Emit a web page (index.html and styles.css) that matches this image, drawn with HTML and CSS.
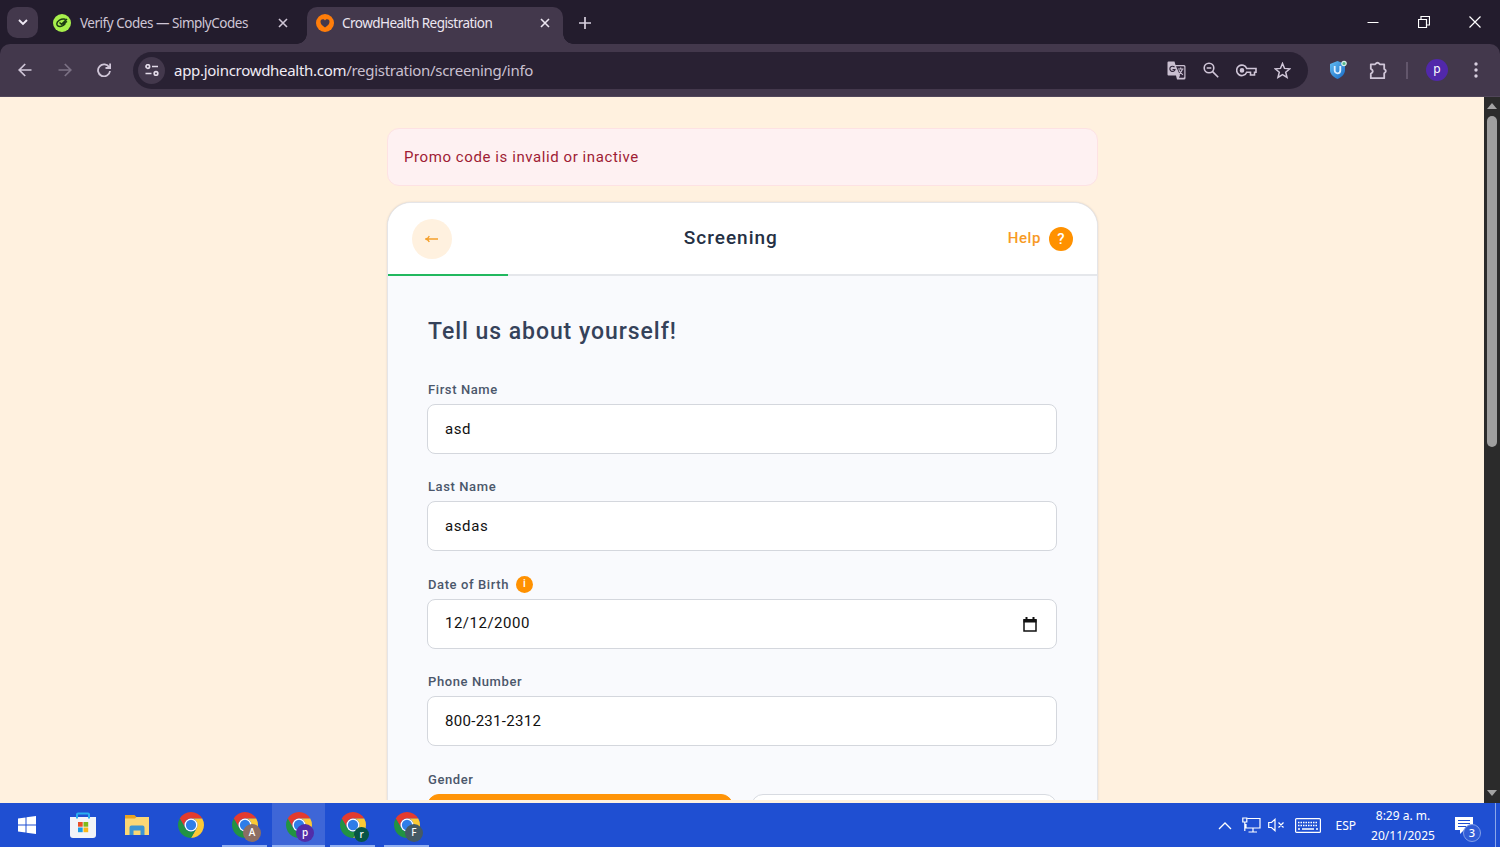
FILE: index.html
```html
<!DOCTYPE html>
<html lang="en">
<head>
<meta charset="utf-8">
<title>CrowdHealth Registration</title>
<link rel="stylesheet" href="styles.css">
</head>
<body>
<svg class="defs" width="0" height="0">
  <symbol id="chrome" viewBox="0 0 48 48">
    <path fill="#e33b2e" d="M24 12H44.78A24 24 0 0 0 3.22 12L13.61 30A12 12 0 0 1 24 12z"/>
    <path fill="#fcc934" d="M24 12H44.78A24 24 0 0 1 24 48L34.39 30A12 12 0 0 0 24 12z"/>
    <path fill="#229342" d="M3.22 12A24 24 0 0 0 24 48L34.39 30A12 12 0 0 1 13.61 30z"/>
    <circle cx="24" cy="24" r="12" fill="#fff"/><circle cx="24" cy="24" r="9.5" fill="#2f7de9"/>
  </symbol>
  <symbol id="close" viewBox="0 0 10 10"><path d="M1 1l8 8M9 1L1 9" fill="none" stroke="currentColor" stroke-width="1.6"/></symbol>
</svg>

<header class="tabs">
  <div class="tab-search"><svg width="10" height="7" viewBox="0 0 10 7"><path d="M1 1l4 4 4-4" fill="none" stroke="#f0eaf5" stroke-width="1.9"/></svg></div>
  <div class="tab">
    <svg class="favicon" width="18" height="18" viewBox="0 0 18 18"><circle cx="9" cy="9" r="9" fill="#a8f04c"/><path d="M12.500 5.300C8 4.300 3.800 6.800 3.800 9.800c0 4 6.200 3.400 8.700-.6M6.500 8.500l2 1.800L14 5M9.500 10.500l4.500-3.200" fill="none" stroke="#1d3c12" stroke-width="1.500"/></svg>
    <span class="tab-title t-codes">Verify Codes — SimplyCodes</span>
    <svg class="tab-x" width="10" height="10"><use href="#close"/></svg>
  </div>
  <div class="tab active">
    <svg class="favicon" width="18" height="18" viewBox="0 0 18 18"><circle cx="9" cy="9" r="9" fill="#ff7d0a"/><path d="M9 13.500C6 11.500 4.500 9.800 4.500 7.700c0-2.700 3.300-3.200 4.500-1.200 1.200-2 4.500-1.500 4.500 1.200 0 2.100-1.500 3.800-4.500 5.800z" fill="#43384c"/></svg>
    <span class="tab-title t-crowd">CrowdHealth Registration</span>
    <svg class="tab-x" width="10" height="10"><use href="#close"/></svg>
  </div>
  <svg class="plus" width="12" height="12" viewBox="0 0 12 12"><path d="M6 0v12M0 6h12" stroke="#d8cfdf" stroke-width="1.700"/></svg>
  <div class="win">
    <svg width="12" height="12" viewBox="0 0 12 12"><path d="M0.500 6.500h11" stroke="#fff"/></svg>
    <svg width="12" height="12" viewBox="0 0 12 12"><path d="M.5 3.500h8v8h-8zM3 3V.5h8.500V9H9" fill="none" stroke="#fff" stroke-width="1.200"/></svg>
    <svg width="12" height="12" viewBox="0 0 12 12"><path d="M.5.5l11 11M11.500.5l-11 11" stroke="#fff" stroke-width="1.200"/></svg>
  </div>
</header>

<nav class="toolbar">
  <svg class="nav-i" width="14" height="14" viewBox="0 0 14 14"><path d="M13.500 7H1.500M7.200 1L1.200 7l6 6" fill="none" stroke="#d0c6d8" stroke-width="1.700"/></svg>
  <svg class="nav-i dim" width="14" height="14" viewBox="0 0 14 14"><path d="M.5 7h12M6.800 1l6 6-6 6" fill="none" stroke="#d0c6d8" stroke-width="1.700"/></svg>
  <svg class="nav-i" width="14" height="14" viewBox="0 0 14 14"><path d="M12.300 4.500A6 6 0 1 0 13 8M13.100.5V5H8.500" fill="none" stroke="#d0c6d8" stroke-width="1.800"/></svg>
  <div class="omnibox">
    <span class="site"><svg width="14" height="12" viewBox="0 0 14 12" fill="none" stroke="#e4dce9" stroke-width="1.700"><circle cx="2.800" cy="2.500" r="1.800"/><path d="M7 2.500h6M.5 9.500h6"/><circle cx="11" cy="9.500" r="1.800"/></svg></span>
    <span class="url"><b>app.joincrowdhealth.com</b>/registration/screening/info</span>
    <svg class="omni-i" width="19" height="19" viewBox="0 0 19 19"><path d="M1.500.5h6l1 3.500h8.500q1.500 0 1.500 1.500v11.500q0 1.500-1.500 1.500H10l-1-4H1.500Q.5 14.500.5 13.500v-12q0-1 1-1z" fill="#c9bfd0"/><path d="M9 5.200h7.300q1 0 1 1v9.600q0 1-1 1H12l1-2.500z" fill="#30263a"/><path d="M7.500 6.200A2.600 2.600 0 1 0 8 8.500H5.500" fill="none" stroke="#30263a" stroke-width="1.200"/><path d="M11 8h5.500M13.700 6.500V8M15.500 8c-.6 2-1.800 4-3.800 5.500M12 9.300c1 2.200 2.200 3.300 3.900 4.600" stroke="#c9bfd0" fill="none" stroke-width="1.100"/></svg>
    <svg class="omni-i" width="16" height="16" viewBox="0 0 16 16" fill="none" stroke="#d0c6d8" stroke-width="1.600"><circle cx="6" cy="6" r="4.800"/><path d="M9.600 9.600l5.600 5.600M3.700 6h4.600"/></svg>
    <svg class="omni-i" width="21" height="13" viewBox="0 0 21 13" fill="none" stroke="#d0c6d8" stroke-width="1.600"><path d="M10.700 4.500H20V8.200H18.500V11H14.500V8.200H10.700A5.200 5.200 0 1 1 10.700 4.500z"/><circle cx="6" cy="6.400" r="1.500" fill="#d0c6d8"/></svg>
    <svg class="omni-i" width="17" height="17" viewBox="0 0 17 17"><path d="M8.500 1.500l2 4.900 5.300.4-4.100 3.400 1.300 5.200-4.500-2.800L4 15.400l1.300-5.200L1.200 6.800l5.300-.4z" fill="none" stroke="#d0c6d8" stroke-width="1.500"/></svg>
  </div>
  <svg class="shield" width="19" height="20" viewBox="0 0 19 20"><defs><linearGradient id="sg" x2="1" y2="1"><stop stop-color="#64bdf2"/><stop offset="1" stop-color="#1769c5"/></linearGradient></defs><path d="M1 4l7.500-3L16 4v6c0 4-3 7-7.500 9C4 17 1 14 1 10z" fill="url(#sg)"/><path d="M5.700 6v4.500a2.800 2.800 0 0 0 5.600 0V6" fill="none" stroke="#dceeff" stroke-width="1.800"/><circle cx="15" cy="3.500" r="2.200" fill="#55b88a" stroke="#d7efe9" stroke-width="1.200"/></svg>
  <svg class="puzzle" width="19" height="19" viewBox="0 0 19 19"><path d="M1.800 3.300H6.200Q8.500 .2 10.800 3.300H15.200V8Q18.500 10 15.200 12.200V17.200H1.800V12.700Q5.800 10.200 1.800 7.700z" fill="none" stroke="#d0c6d8" stroke-width="1.800" stroke-linejoin="round"/></svg>
  <i class="split"></i>
  <span class="profile">p</span>
  <svg class="dots" width="4" height="16" viewBox="0 0 4 16" fill="#d8cfdf"><circle cx="2" cy="2" r="1.700"/><circle cx="2" cy="8" r="1.700"/><circle cx="2" cy="14" r="1.700"/></svg>
</nav>

<div class="viewport">
  <main class="page">
    <div class="alert"><span>Promo code is invalid or inactive</span></div>
    <section class="card">
      <div class="card-head">
        <span class="back"><svg width="13" height="8" viewBox="0 0 13 8"><path d="M13 4H1M4.300 1Q3.500 3.300.8 4q2.700.7 3.500 3" fill="none" stroke="#f5a02c" stroke-width="1.300"/></svg></span>
        <h1>Screening</h1>
        <span class="help"><span class="help-t">Help</span><span class="q">?</span></span>
      </div>
      <div class="progress"><div class="done"></div></div>
      <form class="form">
        <h2>Tell us about yourself!</h2>
        <div class="field"><label>First Name</label><div class="input"><span>asd</span></div></div>
        <div class="field"><label>Last Name</label><div class="input"><span>asdas</span></div></div>
        <div class="field"><label>Date of Birth <span class="info">i</span></label><div class="input"><span class="date">12/12/2000</span><svg width="14" height="15" viewBox="0 0 14 15"><path d="M1 3v11h12V3z" fill="none" stroke="#111" stroke-width="1.500"/><path d="M.5 2h13v3.500H.5zM2.500 0h2v2h-2zM9.500 0h2v2h-2z" fill="#111"/></svg></div></div>
        <div class="field"><label>Phone Number</label><div class="input"><span class="phone">800-231-2312</span></div></div>
        <div class="field"><label>Gender</label><div class="choices"><div class="choice on"></div><div class="choice"></div></div></div>
      </form>
    </section>
  </main>
  <div class="scroll">
    <svg width="10" height="6" viewBox="0 0 10 6"><path d="M5 0l5 6H0z" fill="#a3a3a3"/></svg>
    <div class="thumb"></div>
    <svg class="down" width="10" height="6" viewBox="0 0 10 6"><path d="M0 0h10L5 6z" fill="#a3a3a3"/></svg>
  </div>
</div>

<footer class="taskbar">
  <div class="apps">
    <div class="app start"><svg width="18" height="18" viewBox="0 0 18 18" fill="#fff"><path d="M0 2.600L7.500 1.500V8.500H0zM8.500 1.300L18 0v8.500H8.500zM0 9.500h7.500v7L0 15.400zM8.500 9.500H18V18l-9.500-1.300z"/></svg></div>
    <div class="app"><svg width="26" height="27" viewBox="0 0 26 27"><path d="M7 7V2.500q0-1 1-1h10q1 0 1 1V7" fill="none" stroke="#29aef0" stroke-width="2"/><path d="M0 5h26v18q0 3-3 3H3q-3 0-3-3z" fill="#f1f3f8"/><path d="M7 6.500V2.500M19 6.500V2.500" stroke="#29aef0" stroke-width="2"/><path fill="#e94f28" d="M8 10h4.700v4.700H8z"/><path fill="#7fba1b" d="M13.500 10h4.700v4.700h-4.700z"/><path fill="#1c9be6" d="M8 15.500h4.700v4.700H8z"/><path fill="#f8b817" d="M13.500 15.500h4.700v4.700h-4.700z"/></svg></div>
    <div class="app"><svg width="24" height="21" viewBox="0 0 24 21"><path d="M0 0h9.500l2 2H24v6H0z" fill="#eaa321"/><path d="M0 3.500h10l1.500-1.500H24v18H0z" fill="#fbd775"/><path d="M4.500 20v-7.500q0-2 2-2h11q2 0 2 2V20h-4v-4.500h-7V20z" fill="#3c94d3"/></svg></div>
    <div class="app"><svg width="26" height="26"><use href="#chrome"/></svg></div>
    <div class="app run"><svg width="26" height="26"><use href="#chrome"/></svg><b class="badge a">A</b></div>
    <div class="app run cur"><svg width="26" height="26"><use href="#chrome"/></svg><b class="badge p">p</b></div>
    <div class="app run"><svg width="26" height="26"><use href="#chrome"/></svg><b class="badge r">r</b></div>
    <div class="app run"><svg width="26" height="26"><use href="#chrome"/></svg><b class="badge f">F</b></div>
  </div>
  <div class="tray">
    <svg width="14" height="9" viewBox="0 0 14 9"><path d="M1 8l6-6 6 6" fill="none" stroke="#fff" stroke-width="1.300"/></svg>
    <svg class="net" width="19" height="16" viewBox="0 0 19 16" fill="none" stroke="#fff" stroke-width="1.200"><path d="M5.500 1.500H18V11H4V7M11 11v4M6.500 15h8.500M.8 1h4v4h-4zM2.800 5v9"/></svg>
    <svg class="vol" width="17" height="14" viewBox="0 0 17 14" fill="none" stroke="#fff" stroke-width="1.200"><path d="M.7 4.500h2.800L7 1.300v11.400L3.500 9.500H.7zM10.500 4.500l5 5M15.500 4.500l-5 5"/></svg>
    <svg class="kbd" width="26" height="15" viewBox="0 0 26 15" fill="none" stroke="#fff"><rect x=".6" y=".6" width="24.800" height="13.800" rx="1" stroke-width="1.200"/><path d="M3 4.500h20M3 7.500h20" stroke-width="1.300" stroke-dasharray="1.500 1"/><path d="M3 11h2M7 11h12M21 11h2" stroke-width="1.300"/></svg>
    <span class="lang">ESP</span>
    <div class="clock"><span class="time">8:29 a. m.</span><span class="day">20/11/2025</span></div>
    <div class="notif"><svg width="18" height="17" viewBox="0 0 18 17"><path d="M0 0h18v13H9l-4 4v-4H0z" fill="#fff"/><path d="M3 3.500h12M3 6.500h12M3 9.500h8" stroke="#1f4fd2" stroke-width="1.200"/></svg><b>3</b></div>
    <i class="peek"></i>
  </div>
</footer>
</body>
</html>
```

FILE: styles.css
```css
* { box-sizing: border-box; }
body { margin: 0; width: 1500px; height: 847px; overflow: hidden; display: flex; flex-direction: column; font-family: "Noto Sans", sans-serif; background: #231c2d; }
svg { display: block; flex: none; }
.defs { position: absolute; }

.tabs { height: 44px; flex: none; display: flex; align-items: flex-start; padding-left: 7px; background: #231c2d; }
.tab-search { width: 31px; height: 31px; margin-top: 7px; border-radius: 10px; background: #43384c; display: grid; place-items: center; }
.tab { height: 37px; margin-top: 7px; display: flex; align-items: center; padding: 0 13px 6px 15px; width: 269px; color: #cfc6d6; }
.tab.active { position: relative; width: 256px; height: 37px; padding-left: 9px; background: #43384c; border-radius: 10px 10px 0 0; color: #ece6f1; }
.tab.active::before, .tab.active::after { content: ""; position: absolute; bottom: 0; width: 10px; height: 10px; }
.tab.active::before { left: -10px; background: radial-gradient(circle at 0 0, transparent 9.5px, #43384c 10px); }
.tab.active::after { right: -10px; background: radial-gradient(circle at 100% 0, transparent 9.5px, #43384c 10px); }
.tab-title { flex: 1; margin-left: 9px; padding-top: 1px; font-size: 13.500px; white-space: nowrap; }
.tab.active .tab-title { margin-left: 8px; }
.t-codes { letter-spacing: -0.48px; }
.t-crowd { letter-spacing: -0.53px; }
.tab:not(.active) .tab-x { margin-right: 6px; }
.plus { margin: 17px 0 0 16px; }
.win { margin: 16px 19px 0 auto; display: flex; gap: 39px; }

.toolbar { height: 53px; flex: none; display: flex; align-items: center; padding: 0 22px 0 18px; background: #43384c; border-radius: 10px 10px 0 0; border-bottom: 1px solid #51465a; }
.nav-i { margin-right: 25.500px; }
.nav-i.dim { opacity: .4; }
.nav-i:nth-child(3) { margin-right: 22px; }
.omnibox { width: 1175px; height: 37px; border-radius: 19px; background: #292133; display: flex; align-items: center; padding: 0 17px 0 5px; }
.site { width: 27px; height: 27px; border-radius: 50%; background: #43384c; display: grid; place-items: center; }
.url { flex: 1; margin-left: 9px; font-size: 15px; letter-spacing: -0.29px; color: #c9c0d0; white-space: nowrap; }
.url b { font-weight: 400; color: #f0ebf4; }
.omni-i { margin-left: 17px; }
.shield { margin-left: 21px; }
.puzzle { margin-left: 21px; }
.split { width: 2px; height: 17px; margin-left: 18px; background: #62566b; }
.profile { width: 22px; height: 22px; margin-left: 18px; border-radius: 50%; background: #5128aa; color: #fff; font-size: 12px; line-height: 20px; text-align: center; }
.dots { margin-left: auto; }

.viewport { height: 706px; flex: none; display: flex; overflow: hidden; background: #fff1df; }
.page { width: 1484px; height: 703px; overflow: hidden; display: flex; flex-direction: column; align-items: center; padding-top: 31px; font-family: Roboto, sans-serif; }
.alert { width: 711px; height: 58px; flex: none; margin-left: 1px; border: 1px solid #fde2e3; border-radius: 12px; background: #fef1f2; color: #9f1d35; font-size: 15px; line-height: 56px; padding-left: 16px; letter-spacing: .58px; }
.card { width: 711px; height: 900px; flex: none; margin: 16px 0 0 1px; border: 1px solid #e5e5e8; border-radius: 24px; overflow: hidden; background: #f9fafd; box-shadow: 0 0 2px rgba(80, 80, 100, .2); }
.card-head { height: 71px; display: flex; align-items: center; justify-content: space-between; padding: 0 24px; background: #fff; }
.back { width: 40px; height: 40px; border-radius: 50%; background: #fff1df; display: grid; place-items: center; padding-right: 2px; }
h1 { margin: 0 0 2px 2px; font-size: 19px; font-weight: 500; letter-spacing: 1px; color: #253044; }
.help { display: flex; align-items: center; gap: 8px; color: #f79a25; font-size: 15px; font-weight: 500; letter-spacing: .6px; }
.help-t { margin-top: -1px; }
.q { width: 24px; height: 24px; border-radius: 50%; background: #ff9100; color: #fff; line-height: 24px; text-align: center; letter-spacing: 0; }
.progress { height: 2px; background: #e5e7eb; }
.done { width: 120px; height: 2px; background: #22b85f; }
.form { padding: 40px 40px 0; }
h2 { margin: 0 0 48px; height: 16px; line-height: 32px; font-size: 23px; font-weight: 500; letter-spacing: .95px; color: #35425a; white-space: nowrap; }
.field { height: 97.400px; }
.field label { height: 24px; display: flex; line-height: 20px; font-size: 13px; font-weight: 500; letter-spacing: .6px; color: #4b576b; }
.info { width: 17px; height: 17px; margin: 1px 0 0 7px; border-radius: 50%; background: #ff9100; color: #fff; font-size: 11px; line-height: 16px; text-align: center; letter-spacing: 0; }
.input { width: 630px; height: 50px; margin-left: -1px; display: flex; align-items: center; justify-content: space-between; padding: 0 19px 1px 17px; border: 1px solid #d4d7dd; border-radius: 8px; background: #fff; font-size: 15px; letter-spacing: .6px; color: #111; }
.date { letter-spacing: .5px; }
.phone { letter-spacing: .3px; }
.input svg { margin-top: 2px; }
.choices { display: flex; gap: 18px; margin-left: -1px; }
.choice { width: 306px; height: 50px; border: 1px solid #d8dbe1; border-radius: 12px; background: #fff; }
.choice.on { background: #ff9408; border-color: #ff9408; }
.scroll { width: 16px; display: flex; flex-direction: column; align-items: center; padding: 6px 0 7px; background: #2b2b2b; }
.thumb { width: 10px; height: 331px; margin-top: 7px; border-radius: 5px; background: #9f9f9f; }
.down { margin-top: auto; }

.taskbar { height: 44px; flex: none; display: flex; justify-content: space-between; background: #1f4fd2; color: #fff; }
.apps { display: flex; gap: 1px; }
.app { position: relative; width: 53px; height: 44px; display: grid; place-items: center; }
.app.start { width: 54px; margin-right: 1px; }
.app.run { border-bottom: 2px solid #91aff0; padding-top: 2px; }
.app.run:not(.cur) { width: 45px; margin: 0 4px; }
.app.cur { background: #3e66d7; }
.badge { position: absolute; right: 7px; bottom: 4px; width: 18px; height: 18px; border-radius: 50%; font-size: 10px; line-height: 17px; font-weight: 500; text-align: center; }
.badge { right: 6px; bottom: 3px; }
.cur .badge { right: 11px; }
.a { background: #8d6e63; } .p { background: #512da8; } .r { background: #075546; width: 15px; height: 15px; line-height: 14px; } .f { background: #455a64; }
.tray { display: flex; align-items: center; font-size: 12px; }
.net { margin-left: 10px; }
.vol { margin-left: 7px; }
.kbd { margin-left: 10px; }
.lang { margin-left: 14px; }
.clock { width: 66px; margin-left: 14px; display: flex; flex-direction: column; align-items: center; line-height: 20px; padding-top: 1px; white-space: nowrap; }
.notif { position: relative; margin-left: 19px; }
.notif b { position: absolute; left: 8px; top: 7px; width: 18px; height: 18px; border: 1px solid #829fe9; border-radius: 50%; background: #315cd5; line-height: 16px; text-align: center; font-size: 11px; font-weight: 500; }
.peek { width: 1px; height: 44px; margin: 0 4px 0 22px; background: #8ba6e9; }
```
